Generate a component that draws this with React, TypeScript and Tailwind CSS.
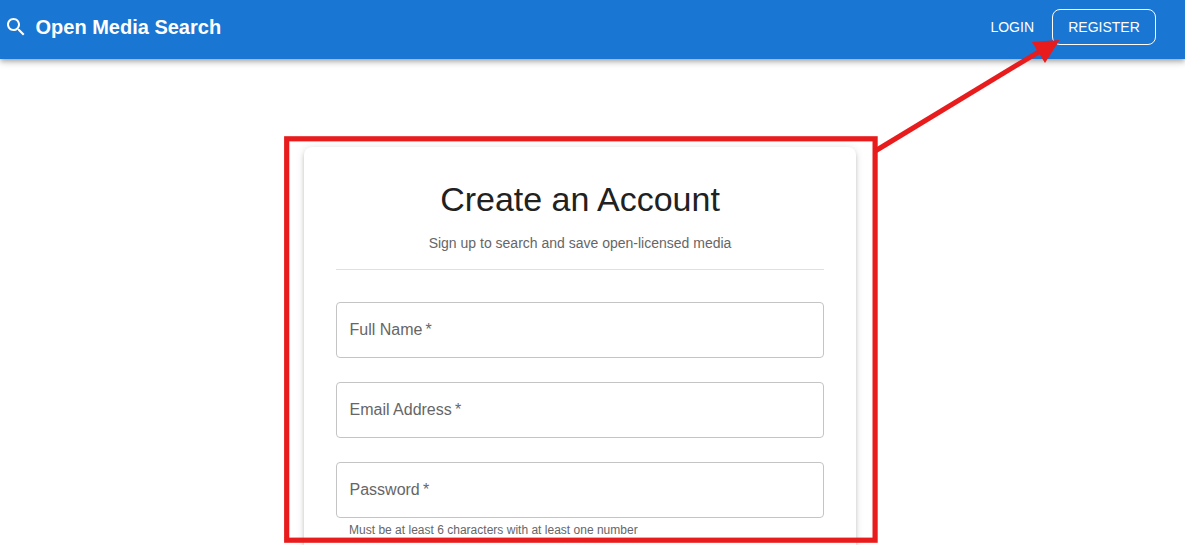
function SearchIcon() {
  return (
    <svg viewBox="0 0 24 24" className="h-6 w-6 shrink-0 fill-white" aria-hidden="true">
      <path d="M15.5 14h-.79l-.28-.27C15.41 12.59 16 11.11 16 9.5 16 5.91 13.09 3 9.5 3S3 5.91 3 9.5 5.91 16 9.5 16c1.61 0 3.09-.59 4.23-1.57l.27.28v.79l5 4.99L20.49 19l-4.99-5zm-6 0C7.01 14 5 11.99 5 9.5S7.01 5 9.5 5 14 7.01 14 9.5 11.99 14 9.5 14z" />
    </svg>
  );
}

function Header() {
  return (
    <header className="flex h-[59px] shrink-0 items-center bg-[#1976d2] pb-[5px] pl-[3.5px] pr-[29px] text-white shadow-[0_2px_4px_-1px_rgba(0,0,0,0.2),0_4px_5px_0_rgba(0,0,0,0.14),0_1px_10px_0_rgba(0,0,0,0.12)]">
      <SearchIcon />
      <div className="ml-2 grow text-xl font-bold">Open Media Search</div>
      <button className="h-9 px-2 text-sm">LOGIN</button>
      <button className="ml-[10px] h-9 w-[104px] rounded-lg border border-white text-sm">REGISTER</button>
    </header>
  );
}

function Field({ label, helper }: { label: string; helper?: string }) {
  return (
    <div>
      <div className="flex h-14 items-center rounded border border-[#c4c4c4] px-[12.5px] pb-px text-base text-[#666666]">
        {label}&thinsp;*
      </div>
      {helper && <p className="ml-[13px] mt-[2px] text-xs leading-[20px] tracking-[0.01px] text-[#666666]">{helper}</p>}
    </div>
  );
}

function Annotation() {
  return (
    <svg viewBox="0 0 1185 545" className="pointer-events-none absolute inset-0 h-[545px] w-[1185px]" aria-hidden="true">
      <rect x="286.7" y="138.8" width="588.4" height="401.4" fill="none" stroke="#e81c1c" strokeWidth="5.2" />
      <path d="M876 150.5 L1043 49.3" stroke="#e81c1c" strokeWidth="5" />
      <path d="M1059.5 40 L1032 42 L1045 63 Z" fill="#e81c1c" />
    </svg>
  );
}

export default function App() {
  return (
    <div className="relative flex h-[545px] w-[1185px] flex-col overflow-hidden bg-white font-['Liberation_Sans',Arial,sans-serif]">
      <Header />
      <main className="ml-[304px] mt-[88px] h-[480px] w-[552px] shrink-0 rounded-lg bg-white px-8 pt-[31px] shadow-[0_3px_3px_-2px_rgba(0,0,0,0.2),0_3px_4px_0_rgba(0,0,0,0.14),0_1px_8px_0_rgba(0,0,0,0.12)]">
        <h1 className="text-center text-[34px] leading-[42px] text-[#212121]">Create an Account</h1>
        <p className="mt-[13px] text-center text-sm leading-5 text-[#666666]">
          Sign up to search and save open-licensed media
        </p>
        <hr className="mt-4 border-[#e0e0e0]" />
        <form className="mt-8 flex flex-col gap-6">
          <Field label="Full Name" />
          <Field label="Email Address" />
          <Field label="Password" helper="Must be at least 6 characters with at least one number" />
        </form>
      </main>
      <Annotation />
    </div>
  );
}
